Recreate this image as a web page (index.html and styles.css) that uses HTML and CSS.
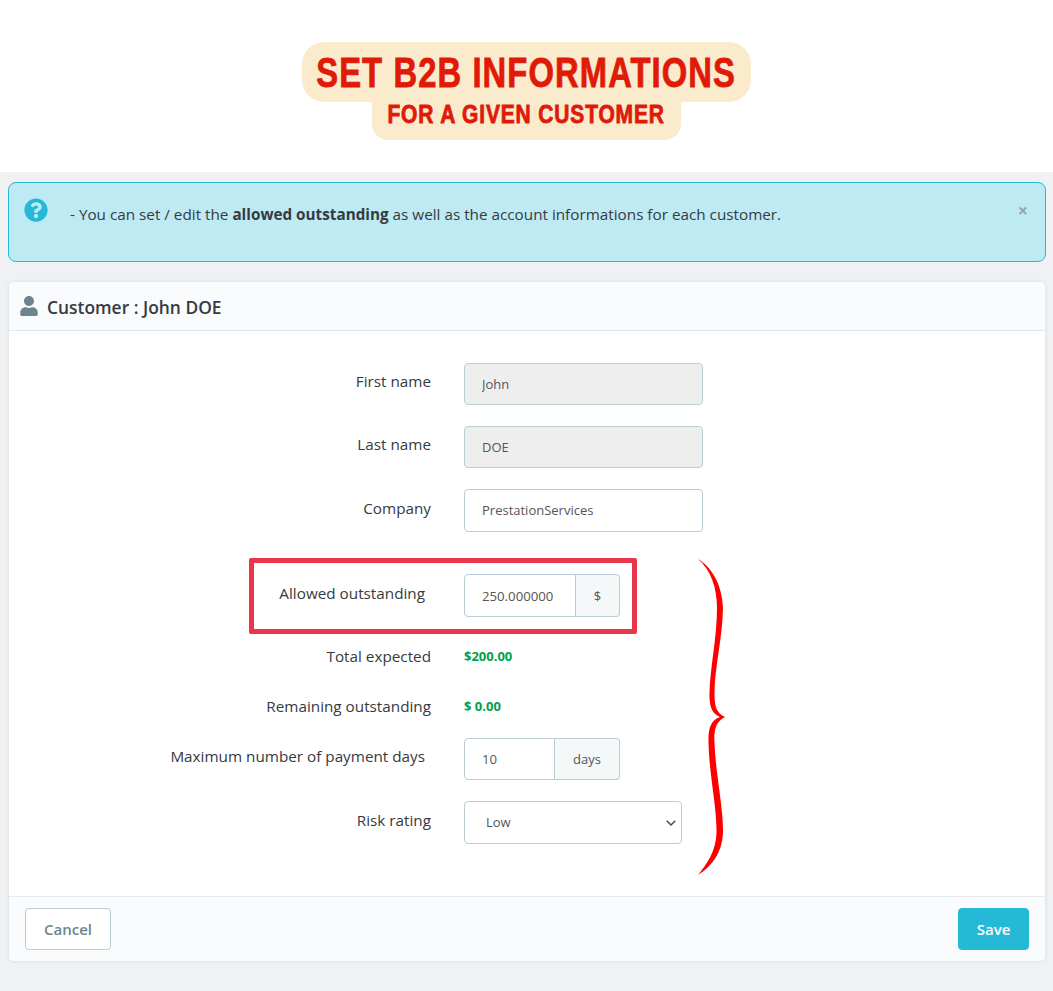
FILE: index.html
```html
<!DOCTYPE html>
<html lang="en">
<head>
<meta charset="utf-8">
<title>Set B2B informations</title>
<link rel="stylesheet" href="styles.css">
</head>
<body>
<header class="banner">
  <h1 class="banner-line banner-main"><span class="banner-text banner-text-main">SET B2B INFORMATIONS</span></h1>
  <p class="banner-line banner-sub"><span class="banner-text banner-text-sub">FOR A GIVEN CUSTOMER</span></p>
</header>
<main class="page">
  <div class="alert">
    <svg class="alert-icon" viewBox="0 0 512 512"><path d="M504 256c0 136.997-111.043 248-248 248S8 392.997 8 256C8 119.083 119.043 8 256 8s248 111.083 248 248zM262.655 90c-54.497 0-89.255 22.957-116.549 63.758-3.536 5.286-2.353 12.415 2.715 16.258l34.699 26.31c5.205 3.947 12.621 3.008 16.665-2.122 17.864-22.658 30.113-35.797 57.303-35.797 20.429 0 45.698 13.148 45.698 32.958 0 14.976-12.363 22.667-32.534 33.976C247.128 238.528 216 254.941 216 296v4c0 6.627 5.373 12 12 12h56c6.627 0 12-5.373 12-12v-1.333c0-28.462 83.186-29.647 83.186-106.667 0-58.002-60.165-102-116.531-102zM256 338c-25.365 0-46 20.635-46 46 0 25.364 20.635 46 46 46s46-20.636 46-46c0-25.365-20.635-46-46-46z"/></svg>
    <p class="alert-text">- You can set / edit the <b>allowed outstanding</b> as well as the account informations for each customer.</p>
    <span class="alert-close">×</span>
  </div>
  <section class="card">
    <div class="card-head">
      <svg class="user-icon" viewBox="0 0 448 512"><path d="M224 256c70.7 0 128-57.3 128-128S294.7 0 224 0 96 57.3 96 128s57.3 128 128 128zm89.6 32h-16.7c-22.2 10.2-46.9 16-72.9 16s-50.6-5.8-72.9-16h-16.7C60.2 288 0 348.2 0 422.4V464c0 26.5 21.5 48 48 48h352c26.5 0 48-21.5 48-48v-41.6c0-74.2-60.2-134.4-134.4-134.4z"/></svg>
      <h2 class="card-title">Customer : John DOE</h2>
    </div>
    <form class="card-body">
      <div class="highlight"></div>
      <svg class="brace" viewBox="0 0 30 320"><path d="M1 1C14 9 25 25 26 50C25.5 80 17.5 110 17.5 135C17.5 150 20 155 28 159C20 163 16.5 170 17.5 185C18.5 215 26.5 250 26 275C25 295 15 308 1 317C10 306 19 293 19.5 275C20 250 12 215 11.5 185C11 170 14 162 23 159C16 156 12 150 12.5 135C13 110 20 80 20 50C20 30 14 12 1 1Z"/></svg>
      <div class="row">
        <label class="label">First name</label>
        <input class="input input-wide input-off" value="John" readonly>
      </div>
      <div class="row">
        <label class="label">Last name</label>
        <input class="input input-wide input-off" value="DOE" readonly>
      </div>
      <div class="row row-tall row-before-box">
        <label class="label">Company</label>
        <input class="input input-wide" value="PrestationServices">
      </div>
      <div class="row row-tall row-boxed">
        <label class="label label-inset">Allowed outstanding</label>
        <div class="group">
          <input class="input group-input group-input-money" value="250.000000">
          <span class="addon addon-money">$</span>
        </div>
      </div>
      <div class="row row-static row-first-static">
        <span class="label label-static">Total expected</span>
        <strong class="amount">$200.00</strong>
      </div>
      <div class="row row-static row-last-static">
        <span class="label label-static">Remaining outstanding</span>
        <strong class="amount">$ 0.00</strong>
      </div>
      <div class="row">
        <label class="label label-inset">Maximum number of payment days</label>
        <div class="group">
          <input class="input group-input group-input-days" value="10">
          <span class="addon addon-days">days</span>
        </div>
      </div>
      <div class="row row-tall row-end">
        <label class="label">Risk rating</label>
        <div class="select-wrap">
          <select class="select"><option>Low</option></select>
          <svg class="select-chevron" viewBox="0 0 10 6"><path d="M0.7 0.7L5 5L9.3 0.7"/></svg>
        </div>
      </div>
    </form>
    <div class="card-foot">
      <button class="btn btn-cancel" type="button">Cancel</button>
      <button class="btn btn-save" type="button">Save</button>
    </div>
  </section>
</main>
</body>
</html>
```
FILE: styles.css
```css
* { box-sizing: border-box; }
html, body { margin: 0; padding: 0; }
body {
  background: #eff1f2;
  font-family: "Open Sans", sans-serif;
  color: #363a41;
  min-height: 991px;
}
.banner {
  height: 172px;
  background: #fff;
  padding-top: 42px;
  display: flex;
  flex-direction: column;
  align-items: center;
}
.banner-line {
  margin: 0;
  display: flex;
  justify-content: center;
  font-family: "Liberation Sans", sans-serif;
  font-weight: 700;
  color: #e01a08;
  background: #faebcd;
  white-space: nowrap;
}
.banner-text { flex: none; -webkit-text-stroke: 0.8px #e01a08; }
.banner-main {
  width: 449px;
  height: 60px;
  border-radius: 22px;
  font-size: 42px;
  line-height: 62px;
}
.banner-text-main { letter-spacing: 1.4px; transform: scaleX(0.78); }
.banner-sub {
  width: 309px;
  height: 42px;
  margin-top: -4px;
  border-radius: 0 0 16px 16px;
  font-size: 25px;
  line-height: 33px;
}
.banner-text-sub { letter-spacing: 1px; transform: scaleX(0.84); }
.page { padding: 10px 7px 29px 8px; }
.alert {
  height: 80px;
  background: #beeaf3;
  border: 1px solid #25b9d7;
  border-radius: 8px;
  padding: 15px 17px 0 16px;
  display: flex;
  align-items: flex-start;
}
.alert-icon { width: 24px; height: 24px; fill: #25b9d7; flex: none; margin-right: 21px; margin-left: -1px; }
.alert-text { margin: 6px 0 0 1px; font-size: 15.27px; line-height: 21px; flex: 1; }
.alert-text b { font-weight: 700; }
.alert-close { font-size: 18px; line-height: 18px; font-weight: 700; color: #9aa5ab; margin-top: 3px; }
.card {
  margin: 20px 0 0 1px;
  width: 1036px;
  height: 679px;
  background: #fff;
  border-radius: 5px;
  box-shadow: 0 0 4px rgba(0,0,0,.1);
  display: flex;
  flex-direction: column;
  overflow: hidden;
}
.card-head {
  height: 49px;
  background: #fafbfc;
  border-bottom: 1px solid #dfe8ec;
  display: flex;
  align-items: center;
  padding-left: 11px;
  flex: none;
}
.user-icon { width: 18px; height: 20px; fill: #6c868e; margin-right: 9px; }
.card-title { margin: 1px 0 0; font-size: 17.4px; line-height: 22px; font-weight: 600; }
.card-body {
  position: relative;
  flex: 1;
  padding-top: 32px;
}
.highlight {
  position: absolute;
  left: 240px;
  top: 227px;
  width: 388px;
  height: 76px;
  border: 5px solid #e8364a;
  border-radius: 2px;
}
.brace {
  position: absolute;
  left: 688px;
  top: 227px;
  width: 30px;
  height: 320px;
  fill: #fe0000;
}
.row { display: flex; align-items: flex-start; margin-bottom: 21px; }
.row-tall .input, .row-tall .group, .row-tall .select, .row-tall .addon { height: 43px; }
.row-before-box { margin-bottom: 42px; }
.row-boxed { margin-bottom: 18px; }
.row-static { height: 42px; align-items: center; }
.row-first-static { margin-bottom: 8px; }
.row-last-static { margin-bottom: 11px; }
.row-end { margin-bottom: 0; }
.label {
  width: 422px;
  flex: none;
  margin-right: 33px;
  text-align: right;
  font-size: 15.27px;
  line-height: 20px;
  padding-top: 8px;
  color: #363a41;
}
.row-tall .label { padding-top: 9px; }
.label-inset { padding-right: 6px; }
.label-static { padding-top: 0; }
.input {
  display: block;
  height: 42px;
  border: 1px solid #bbcdd2;
  border-radius: 4px;
  background: #fff;
  font-family: inherit;
  font-size: 13px;
  color: #555;
  padding: 0 17px 2px;
  outline: none;
}
.input-wide { width: 239px; }
.input-off { background: #eee; padding-bottom: 0; }
.group { display: flex; height: 42px; }
.group-input { border-radius: 4px 0 0 4px; padding-bottom: 0; font-size: 13.2px; }
.group-input-money { width: 112px; }
.group-input-days { width: 91px; }
.addon {
  height: 42px;
  border: 1px solid #bbcdd2;
  border-left: 0;
  border-radius: 0 4px 4px 0;
  background: #f5f8f9;
  font-size: 13px;
  color: #555;
  display: flex;
  align-items: center;
  justify-content: center;
}
.addon-money { width: 44px; }
.addon-days { width: 65px; }
.amount { font-size: 13px; font-weight: 700; color: #00a04a; margin-top: -1px; }
.select-wrap { position: relative; width: 218px; }
.select {
  display: block;
  width: 100%;
  appearance: none;
  background: #fff;
  border: 1px solid #bbcdd2;
  border-radius: 4px;
  font-family: inherit;
  font-size: 13px;
  color: #555;
  padding: 0 21px 2px;
  outline: none;
}
.select-chevron {
  position: absolute;
  right: 6px;
  top: 19px;
  width: 10px;
  height: 6px;
  fill: none;
  stroke: #444;
  stroke-width: 1.4;
}
.card-foot {
  height: 65px;
  flex: none;
  background: #fafbfc;
  border-top: 1px solid #e7ecee;
  display: flex;
  justify-content: space-between;
  align-items: flex-start;
  padding: 11px 16px 0;
}
.btn {
  height: 42px;
  border-radius: 4px;
  font-family: inherit;
  font-size: 15px;
  font-weight: 600;
}
.btn-cancel { width: 86px; background: #fff; border: 1px solid #bbcdd2; color: #6c868e; }
.btn-save { width: 71px; background: #25b9d7; border: 1px solid #25b9d7; color: #fff; }
```
